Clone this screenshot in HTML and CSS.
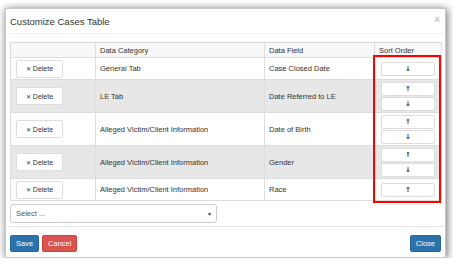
FILE: index.html
```html
<!DOCTYPE html>
<html lang="en">
<head>
    <meta charset="UTF-8">
    <title>Customize Cases Table</title>
    <link rel="stylesheet" href="styles.css">
</head>
<body>

    <div class="modal">
        <div class="modal-header">
            <span class="modal-title">Customize Cases Table</span>
            <span class="close-x">&times;</span>
        </div>

        <div class="modal-body">
            <div class="table-wrap">
                <table class="cases-table">
                    <colgroup>
                        <col class="col-action">
                        <col class="col-category">
                        <col class="col-field">
                        <col class="col-sort">
                    </colgroup>
                    <tr class="head-row">
                        <th></th>
                        <th>Data Category</th>
                        <th>Data Field</th>
                        <th>Sort Order</th>
                    </tr>
                    <tr class="row-single">
                        <td><button class="btn-delete"><span class="x">&#x2715;</span> Delete</button></td>
                        <td>General Tab</td>
                        <td>Case Closed Date</td>
                        <td><div class="sort-stack"><button class="btn-sort">&darr;</button></div></td>
                    </tr>
                    <tr class="row-double striped">
                        <td><button class="btn-delete"><span class="x">&#x2715;</span> Delete</button></td>
                        <td>LE Tab</td>
                        <td>Date Referred to LE</td>
                        <td><div class="sort-stack"><button class="btn-sort">&uarr;</button><button class="btn-sort">&darr;</button></div></td>
                    </tr>
                    <tr class="row-double">
                        <td><button class="btn-delete"><span class="x">&#x2715;</span> Delete</button></td>
                        <td>Alleged Victim/Client Information</td>
                        <td>Date of Birth</td>
                        <td><div class="sort-stack"><button class="btn-sort">&uarr;</button><button class="btn-sort">&darr;</button></div></td>
                    </tr>
                    <tr class="row-double striped">
                        <td><button class="btn-delete"><span class="x">&#x2715;</span> Delete</button></td>
                        <td>Alleged Victim/Client Information</td>
                        <td>Gender</td>
                        <td><div class="sort-stack"><button class="btn-sort">&uarr;</button><button class="btn-sort">&darr;</button></div></td>
                    </tr>
                    <tr class="row-single">
                        <td><button class="btn-delete"><span class="x">&#x2715;</span> Delete</button></td>
                        <td>Alleged Victim/Client Information</td>
                        <td>Race</td>
                        <td><div class="sort-stack"><button class="btn-sort">&uarr;</button></div></td>
                    </tr>
                </table>
                <!-- annotation drawn over the sort column -->
                <div class="highlight"></div>
            </div>

            <div class="select-box">
                <span>Select ...</span>
                <span class="caret">&#9662;</span>
            </div>
        </div>

        <div class="modal-footer">
            <div class="btn-group">
                <button class="btn btn-primary">Save</button>
                <button class="btn btn-danger">Cancel</button>
            </div>
            <button class="btn btn-primary">Close</button>
        </div>
    </div>

</body>
</html>
```

FILE: styles.css
```css
html {
    background-color: #fff;
}
body {
    margin: 0;
    padding: 8px 0 0 5px;
    font-family: 'Liberation Sans', Arial, sans-serif;
    color: #333;
}

.modal {
    width: 441px;
    box-sizing: border-box;
    background-color: #fff;
    border: 1px solid #c8c8c8;
    box-shadow: 1px 1px 8px rgba(0, 0, 0, 0.6);
}

.modal-header {
    height: 24px;
    padding: 0 5px 0 4px;
    display: flex;
    align-items: center;
    justify-content: space-between;
    border-bottom: 1px solid #eee;
}
.modal-title {
    font-size: 9.5px;
    color: #333;
}
.close-x {
    font-size: 10px;
    font-weight: bold;
    color: #c4c4c4;
    margin-top: -4px;
}

.modal-body {
    padding: 8px 4px 3px 4px;
}

.table-wrap {
    position: relative;
}
.cases-table {
    width: 431px;
    table-layout: fixed;
    border-collapse: collapse;
    border: 1px solid #ddd;
    font-size: 7.5px;
}
.col-action { width: 85px; }
.col-category { width: 169px; }
.col-field { width: 110px; }
.col-sort { width: 67px; }

.cases-table th,
.cases-table td {
    border: 1px solid #ddd;
    padding: 0 4px;
    text-align: left;
    font-weight: normal;
    vertical-align: middle;
    white-space: nowrap;
}
.head-row th {
    height: 14px;
    background-color: #f8f8f8;
}
.row-single td {
    height: 21px;
}
.row-double td {
    height: 32px;
}
.striped td {
    background-color: #e7e7e7;
}
.cases-table td:first-child {
    padding-left: 5px;
}

.btn-delete {
    display: block;
    width: 47px;
    height: 18px;
    padding: 0;
    font-family: 'Liberation Sans', Arial, sans-serif;
    font-size: 7px;
    color: #333;
    background-color: #fff;
    border: 1px solid #ddd;
    border-radius: 2px;
}
.btn-delete .x {
    font-family: 'DejaVu Sans', sans-serif;
    font-size: 6px;
    font-weight: bold;
}

.sort-stack {
    display: flex;
    flex-direction: column;
    align-items: center;
    gap: 1px;
}
.btn-sort {
    width: 54px;
    height: 14px;
    padding: 0;
    font-family: 'DejaVu Sans', sans-serif;
    font-size: 7px;
    font-weight: bold;
    line-height: 12px;
    color: #333;
    background-color: #fff;
    border: 1px solid #ddd;
    border-radius: 2px;
}

.highlight {
    position: absolute;
    left: 363px;
    top: 13px;
    width: 64px;
    height: 144px;
    border: 2px solid #f00;
}

.select-box {
    margin-top: 3px;
    width: 207px;
    height: 19px;
    box-sizing: border-box;
    padding: 0 5px;
    display: flex;
    align-items: center;
    justify-content: space-between;
    border: 1px solid #ccc;
    border-radius: 3px;
    font-size: 7.5px;
    color: #555;
}
.select-box .caret {
    font-family: 'DejaVu Sans', sans-serif;
    font-size: 6px;
    color: #444;
}

.modal-footer {
    border-top: 1px solid #e5e5e5;
    padding: 8px 4px 5px 4px;
    display: flex;
    justify-content: space-between;
}
.btn-group {
    display: flex;
    gap: 3px;
}
.btn {
    height: 17px;
    padding: 0 5px;
    font-family: 'Liberation Sans', Arial, sans-serif;
    font-size: 7.5px;
    color: #fff;
    border: 1px solid transparent;
    border-radius: 2px;
    margin: 0;
}
.btn-primary {
    background-color: #2b72ad;
    border-color: #256599;
}
.btn-danger {
    background-color: #d9534f;
    border-color: #d43f3a;
}
```
